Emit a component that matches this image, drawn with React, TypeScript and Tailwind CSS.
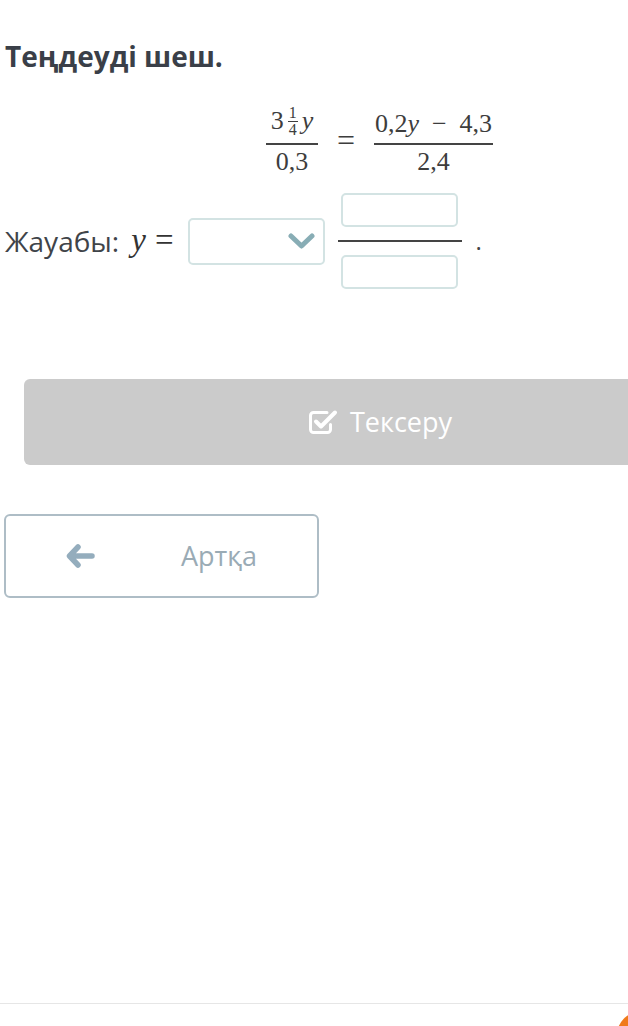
import React from "react";

const sans = { fontFamily: '"Open Sans", "Noto Sans", sans-serif' };
const serif = { fontFamily: '"Liberation Serif", "DejaVu Serif", serif' };

function CheckSquareIcon() {
  return (
    <svg width="30" height="26" viewBox="0 0 30 26" fill="none">
      <path
        d="M19 3.5H5.5a3 3 0 0 0-3 3v14a3 3 0 0 0 3 3h14a3 3 0 0 0 3-3v-5"
        stroke="white"
        strokeWidth="3"
        strokeLinecap="round"
      />
      <path
        d="M8 12.5l5 5L27 3.5"
        stroke="white"
        strokeWidth="4"
        strokeLinecap="round"
        strokeLinejoin="round"
      />
    </svg>
  );
}

function ArrowLeftIcon() {
  return (
    <svg width="29" height="24" viewBox="0 0 29 24" fill="none">
      <path
        d="M12 3L3.5 12L12 21M4.5 12H26"
        stroke="#94adbd"
        strokeWidth="5.5"
        strokeLinecap="round"
        strokeLinejoin="round"
      />
    </svg>
  );
}

export default function App() {
  return (
    <div className="relative w-[628px] h-[1026px] overflow-hidden bg-white" style={sans}>
      <h1 className="pl-[5px] pt-[38px] text-[28px] leading-[36px] font-bold text-[#3a3f48]">
        Теңдеуді шеш.
      </h1>

      {/* equation */}
      <div className="flex items-center justify-center pl-[131px] mt-[30px] text-[#3d3d3d]" style={serif}>
        <div className="flex flex-col items-center">
          <div className="flex items-center px-[2px] text-[26px] leading-none">
            <span>3</span>
            <span className="flex flex-col items-center mx-[4px] text-[16px] leading-[16px]">
              <span>1</span>
              <span className="w-[10px] border-t border-[#3d3d3d]" />
              <span>4</span>
            </span>
            <span className="italic">y</span>
          </div>
          <div className="w-[52px] h-[2px] bg-[#444] mt-[5px]" />
          <div className="text-[26px] leading-[28px] mt-[3px]">0,3</div>
        </div>
        <span className="mx-[19px] text-[32px] leading-none">=</span>
        <div className="flex flex-col items-center mt-[6px]">
          <div className="text-[26px] leading-[28px] whitespace-pre">
            0,2<span className="italic">y</span>  −  4,3
          </div>
          <div className="w-[119px] h-[2px] bg-[#444] mt-[5px]" />
          <div className="text-[26px] leading-[28px] mt-[3px]">2,4</div>
        </div>
      </div>

      {/* answer row */}
      <div className="flex items-center pl-[5px] mt-[17px]">
        <span className="text-[28px] text-[#3f4449]">Жауабы:</span>
        <span className="ml-[12px] text-[33px] italic text-[#333]" style={serif}>y</span>
        <span className="ml-[9px] text-[33px] text-[#333]" style={serif}>=</span>
        <div className="ml-[14px] w-[137px] h-[47px] border-2 border-[#d3e3e3] rounded-[5px] flex items-center justify-end pr-[8px]">
          <svg width="27" height="16" viewBox="0 0 27 16" fill="none">
            <path d="M3 3l10.5 10L24 3" stroke="#88adb5" strokeWidth="5" strokeLinecap="round" strokeLinejoin="round" />
          </svg>
        </div>
        <div className="ml-[13px] flex flex-col items-center">
          <div className="w-[117px] h-[34px] border-2 border-[#d3e3e3] rounded-[5px]" />
          <div className="w-[124px] h-[2px] bg-[#444] my-[13px]" />
          <div className="w-[117px] h-[34px] border-2 border-[#d3e3e3] rounded-[5px]" />
        </div>
        <span className="ml-[14px] text-[24px] text-[#444]">.</span>
      </div>

      {/* check button */}
      <div className="ml-[24px] mt-[90px] w-[712px] h-[86px] rounded-[6px] bg-[#cbcbcb] flex items-center justify-center gap-[12px]">
        <CheckSquareIcon />
        <span className="text-[27px] text-white">Тексеру</span>
      </div>

      {/* back button */}
      <div className="ml-[4px] mt-[49px] w-[315px] h-[84px] rounded-[6px] border-2 border-[#aebdc6] flex items-center pl-[60px]">
        <ArrowLeftIcon />
        <span className="ml-[86px] text-[27px] text-[#9aabb5]">Артқа</span>
      </div>

      {/* footer */}
      <div className="absolute left-0 right-0 top-[1003px] border-t border-[#e6e6e6]" />
      <div className="absolute left-[617px] top-[1012px] w-[46px] h-[46px] rounded-full bg-[#f07a1a]" />
    </div>
  );
}
